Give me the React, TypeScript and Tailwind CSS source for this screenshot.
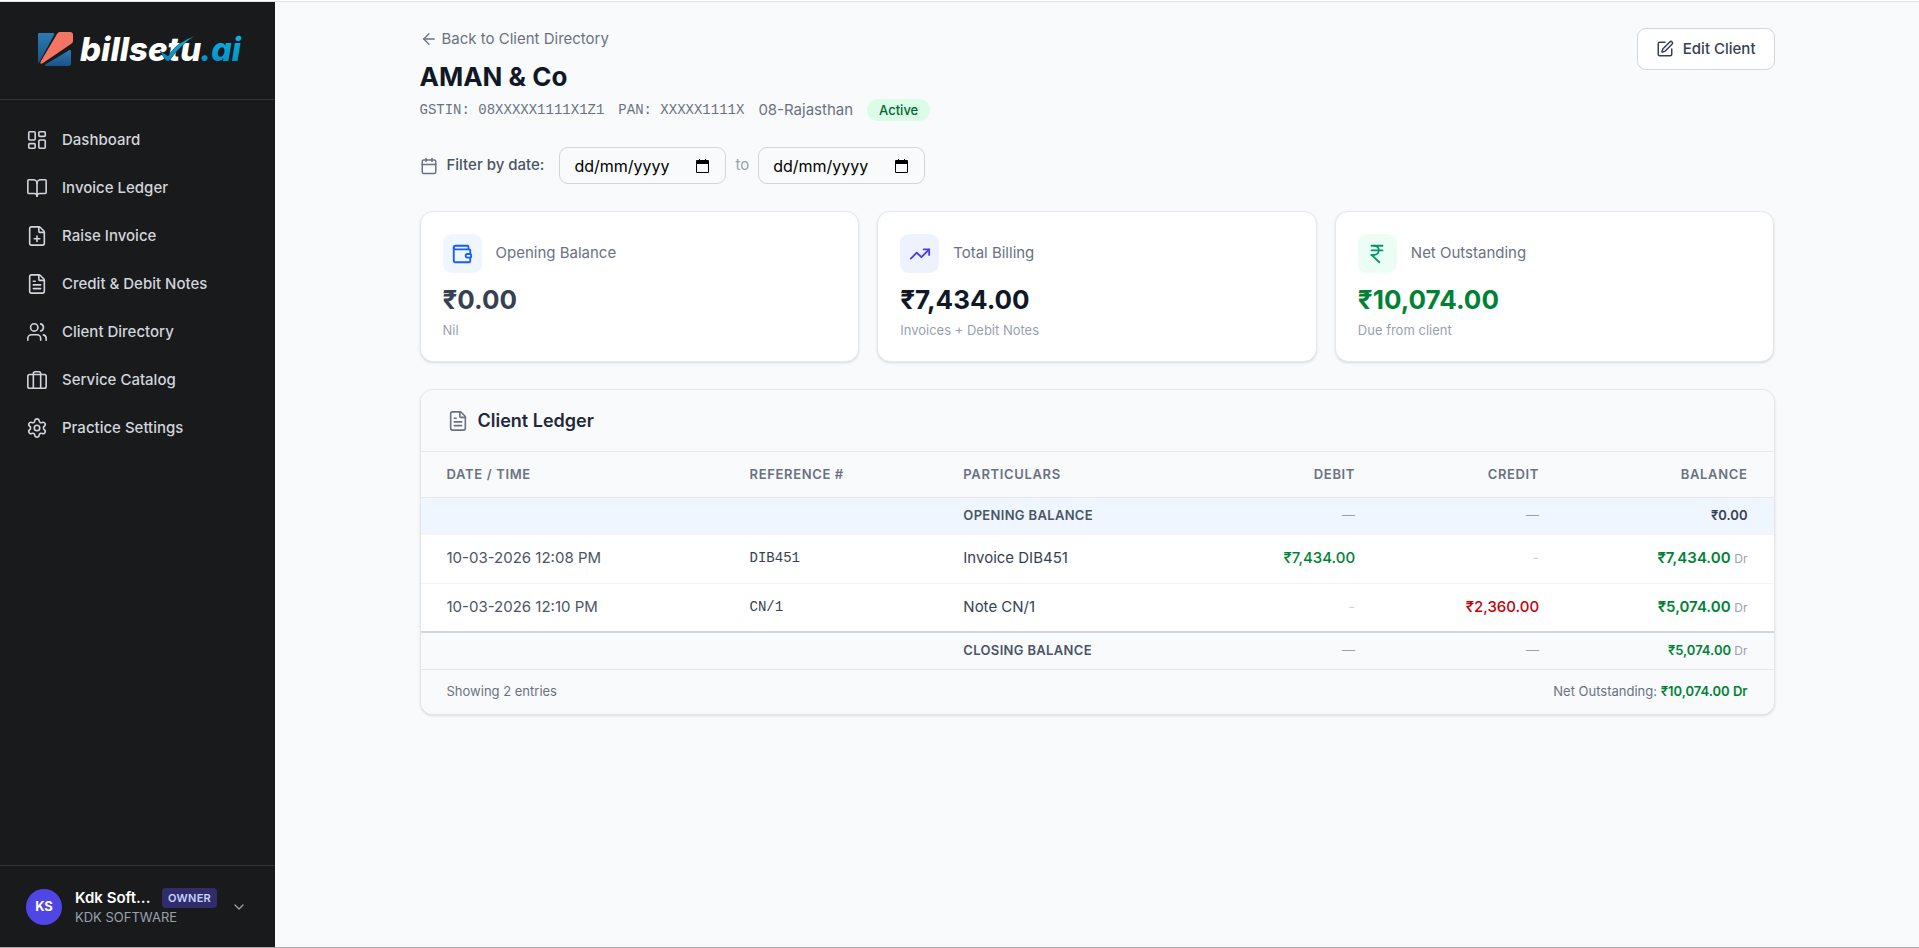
import type { ReactNode } from "react"
import {
    ArrowLeft,
    BookOpen,
    Calendar,
    ChevronDown,
    FilePlus,
    FileText,
    IndianRupee,
    LayoutDashboard,
    Settings,
    SquarePen,
    TrendingUp,
    Users,
    Wallet,
} from "lucide-react"

const ServiceIcon = ({ className }: { className?: string }) => (
    <svg viewBox="0 0 24 24" fill="none" stroke="currentColor" strokeWidth="1.75" strokeLinecap="round" strokeLinejoin="round" className={className}>
        <rect x="2" y="6" width="20" height="15" rx="2" />
        <path d="M8 21V5a2 2 0 0 1 2-2h4a2 2 0 0 1 2 2v16" />
    </svg>
)

const navItems = [
    { label: "Dashboard", icon: LayoutDashboard },
    { label: "Invoice Ledger", icon: BookOpen },
    { label: "Raise Invoice", icon: FilePlus },
    { label: "Credit & Debit Notes", icon: FileText },
    { label: "Client Directory", icon: Users },
    { label: "Service Catalog", icon: ServiceIcon },
    { label: "Practice Settings", icon: Settings },
]

const entries = [
    { date: "10-03-2026 12:08 PM", reference: "DIB451", particulars: "Invoice DIB451", debit: "₹7,434.00", credit: "", balance: "₹7,434.00" },
    { date: "10-03-2026 12:10 PM", reference: "CN/1", particulars: "Note CN/1", debit: "", credit: "₹2,360.00", balance: "₹5,074.00" },
]

function Logo() {
    return (
        <svg viewBox="0 0 204 36" className="h-9 w-[204px] overflow-visible" role="img" aria-label="billsetu.ai">
            <defs>
                <linearGradient id="blue" x1="0" y1="0" x2="0" y2="1">
                    <stop offset="0" stopColor="#2b7cb3" />
                    <stop offset="1" stopColor="#1b5288" />
                </linearGradient>
                <linearGradient id="cyan" x1="0" y1="0" x2="0" y2="1">
                    <stop offset="0" stopColor="#06bdec" />
                    <stop offset="1" stopColor="#0587bf" />
                </linearGradient>
            </defs>
            <path d="M1 2H15Q17 2 16 4L2 30Q0 34 0 30V3Q0 2 1 2Z" fill="url(#blue)" />
            <path d="M22 1H32Q35 1 35 4V10Q35 12 33 13L5 32Q1 34 3 30L19 3Q20 1 22 1Z" fill="#f47563" />
            <path d="M30 20Q33 17 33 21V33Q33 35 31 35H9Q5 35 8 33Z" fill="url(#blue)" />
            <g fontSize="33" fontWeight="800" fontStyle="italic" fontFamily="Inter, sans-serif" className="[font-feature-settings:'cv11']">
                <text x="42" y="30" fill="#fff">billsetu</text>
                <text x="162" y="30" fontSize="32" fill="url(#cyan)">.ai</text>
            </g>
            <path d="M122 20L127 23L130 25Q140 10 157 5Q143 13 131 30H128Z" fill="url(#cyan)" stroke="#191a1b" strokeWidth="0.5" />
        </svg>
    )
}

function Sidebar() {
    return (
        <aside className="flex w-[275px] shrink-0 flex-col bg-[#191a1b]">
            <div className="flex h-[98px] items-start border-b border-[#303132] pt-[29px] pl-[38px]">
                <Logo />
            </div>
            <nav className="flex flex-1 flex-col pt-4">
                {navItems.map(({ label, icon: Icon }) => (
                    <a key={label} href="#" className="flex h-12 items-center gap-[14px] px-[26px] text-[15px] font-medium text-gray-300">
                        <Icon className="size-[22px]" strokeWidth={1.75} />
                        {label}
                    </a>
                ))}
            </nav>
            <button className="flex h-[82px] items-center border-t border-[#303132] pr-7 pl-[26px] text-left">
                <span className="flex size-9 items-center justify-center rounded-full bg-[#4f46e5] text-[13px] font-bold text-white">KS</span>
                <span className="ml-[13px] flex flex-1 flex-col">
                    <span className="flex items-center gap-[11px]">
                        <span className="w-[76px] text-[15px] leading-5 font-semibold text-white">Kdk Soft...</span>
                        <span className="rounded bg-[#312c6b] px-[6px] text-[11px] leading-5 font-semibold tracking-wide text-indigo-200">OWNER</span>
                    </span>
                    <span className="text-[13px] leading-[18px] text-gray-400">KDK SOFTWARE</span>
                </span>
                <ChevronDown className="size-4 text-gray-400" />
            </button>
        </aside>
    )
}

function DateInput({ label }: { label: string }) {
    return (
        <div className="flex h-[37px] w-[167px] items-center justify-between rounded-[9px] border border-gray-300 pr-4 pl-[14px]">
            <input
                type="text"
                aria-label={label}
                placeholder="dd/mm/yyyy"
                className="w-[110px] text-[16px] outline-none placeholder:text-black"
            />
            <button aria-label={`Pick ${label.toLowerCase()}`}>
                <svg viewBox="0 0 13 14" className="h-[14px] w-[13px]">
                    <path d="M3 0H4V1H9V0H10V1H12Q13 1 13 2V13Q13 14 12 14H1Q0 14 0 13V2Q0 1 1 1H3ZM1 5V13H12V5Z" fill="#000" fillRule="evenodd" />
                </svg>
            </button>
        </div>
    )
}

type StatCardProps = {
    label: string
    value: string
    note: string
    tile: string
    valueColor: string
    icon: ReactNode
}

function StatCard({ label, value, note, tile, valueColor, icon }: StatCardProps) {
    return (
        <div className="rounded-[13px] border border-gray-200 bg-white p-[22px] shadow-sm">
            <div className="flex items-center gap-[14px]">
                <div className={`flex size-[39px] items-center justify-center rounded-[9px] ${tile}`}>{icon}</div>
                <span className="text-[15px] text-gray-500">{label}</span>
            </div>
            <p className={`mt-[9px] text-[26px] leading-9 font-bold ${valueColor}`}>{value}</p>
            <p className="mt-[3px] text-[13px] leading-[18px] text-gray-400">{note}</p>
        </div>
    )
}

function SummaryRow({ label, className, children }: { label: string; className: string; children: ReactNode }) {
    return (
        <tr className={`h-[37px] text-[13px] font-semibold ${className}`}>
            <td />
            <td />
            <td className="px-[26px] tracking-wide text-gray-600">{label}</td>
            <td className="px-[26px] text-right font-normal text-gray-400">—</td>
            <td className="px-[26px] text-right font-normal text-gray-400">—</td>
            <td className="px-[26px] text-right">{children}</td>
        </tr>
    )
}

function Ledger() {
    return (
        <section className="mt-[27px] overflow-hidden rounded-[13px] border border-gray-200 bg-white shadow-sm">
            <div className="flex h-[62px] items-center gap-[9px] border-b border-gray-200 bg-gray-50 px-[26px]">
                <FileText className="size-[22px] text-gray-500" strokeWidth={1.75} />
                <h2 className="text-[18px] font-semibold text-gray-800">Client Ledger</h2>
            </div>
            <table className="w-full table-fixed border-collapse text-[15px]">
                <colgroup>
                    <col className="w-[22.4%]" />
                    <col className="w-[15.8%]" />
                    <col className="w-[20.7%]" />
                    <col className="w-[12.1%]" />
                    <col className="w-[13.6%]" />
                    <col className="w-[15.4%]" />
                </colgroup>
                <thead>
                    <tr className="h-[45px] border-b border-gray-200 bg-gray-50 text-left text-[13px] tracking-wider text-gray-500">
                        <th className="px-[26px] font-semibold">DATE / TIME</th>
                        <th className="px-[26px] font-semibold">REFERENCE #</th>
                        <th className="px-[26px] font-semibold">PARTICULARS</th>
                        <th className="px-[26px] text-right font-semibold">DEBIT</th>
                        <th className="px-[26px] text-right font-semibold">CREDIT</th>
                        <th className="px-[26px] text-right font-semibold">BALANCE</th>
                    </tr>
                </thead>
                <tbody>
                    <SummaryRow label="OPENING BALANCE" className="border-b border-gray-100 bg-blue-50">
                        <span className="text-gray-700">₹0.00</span>
                    </SummaryRow>
                    {entries.map((entry) => (
                        <tr key={entry.reference} className="h-[49px] border-b border-gray-100 last:border-b-0">
                            <td className="px-[26px] text-gray-600">{entry.date}</td>
                            <td className="px-[26px] font-['Liberation_Mono',monospace] text-[14px] text-gray-700">{entry.reference}</td>
                            <td className="px-[26px] text-gray-700">{entry.particulars}</td>
                            <td className="px-[26px] text-right font-medium text-green-700">
                                {entry.debit || <span className="font-normal text-gray-300">-</span>}
                            </td>
                            <td className="px-[26px] text-right font-medium text-red-700">
                                {entry.credit || <span className="font-normal text-gray-300">-</span>}
                            </td>
                            <td className="px-[26px] text-right font-semibold text-green-700">
                                {entry.balance} <span className="text-[12px] font-normal text-gray-400">Dr</span>
                            </td>
                        </tr>
                    ))}
                </tbody>
                <tfoot>
                    <SummaryRow label="CLOSING BALANCE" className="border-t-2 border-gray-300 bg-gray-50">
                        <span className="text-green-700">₹5,074.00</span> <span className="text-[12px] font-normal text-gray-400">Dr</span>
                    </SummaryRow>
                </tfoot>
            </table>
            <div className="flex h-[45px] items-center justify-between border-t border-gray-200 bg-gray-50 px-[26px] text-[13px] text-gray-500">
                <span>Showing 2 entries</span>
                <span>
                    Net Outstanding: <span className="font-semibold text-green-700">₹10,074.00 Dr</span>
                </span>
            </div>
        </section>
    )
}

export default function App() {
    return (
        <div className="flex min-h-screen flex-col bg-white pt-px font-['Inter',sans-serif]">
            <div className="flex flex-1 border-t border-b border-t-[#dfe4e2] border-b-[#aaaaaa] bg-gray-50">
                <Sidebar />
                <main className="flex-1 px-[26px] pt-[26px]">
                    <div className="mx-auto max-w-[1355px]">
                        <header className="flex items-start justify-between">
                            <div>
                                <a href="#" className="flex items-center gap-1 text-[15px] leading-[22px] text-gray-500">
                                    <ArrowLeft className="size-[18px]" strokeWidth={1.75} />
                                    Back to Client Directory
                                </a>
                                <h1 className="mt-[9px] text-[26px] leading-9 font-bold text-gray-900">AMAN &amp; Co</h1>
                                <div className="mt-1 flex items-center gap-[14px] text-[15px] leading-[22px] text-gray-500">
                                    <span className="font-['Liberation_Mono',monospace] text-[14px]">GSTIN: 08XXXXX1111X1Z1</span>
                                    <span className="font-['Liberation_Mono',monospace] text-[14px]">PAN: XXXXX1111X</span>
                                    <span>08-Rajasthan</span>
                                    <span className="rounded-full bg-green-100 px-3 text-[13px] font-medium text-green-800">Active</span>
                                </div>
                            </div>
                            <button className="flex h-[42px] items-center gap-[9px] rounded-[9px] border border-gray-300 bg-white px-[18px] text-[15px] font-medium text-gray-700">
                                <SquarePen className="size-[18px]" />
                                Edit Client
                            </button>
                        </header>

                        <div className="mt-[26px] flex items-center gap-[9px]">
                            <Calendar className="size-[18px] text-gray-500" />
                            <span className="mr-1.5 text-[15px] font-medium text-gray-600">Filter by date:</span>
                            <DateInput label="From date" />
                            <span className="text-[15px] text-gray-400">to</span>
                            <DateInput label="To date" />
                        </div>

                        <div className="mt-[27px] grid grid-cols-3 gap-[18px]">
                            <StatCard
                                label="Opening Balance"
                                value="₹0.00"
                                note="Nil"
                                tile="bg-blue-50 text-blue-600"
                                valueColor="text-gray-700"
                                icon={<Wallet className="size-[22px]" />}
                            />
                            <StatCard
                                label="Total Billing"
                                value="₹7,434.00"
                                note="Invoices + Debit Notes"
                                tile="bg-indigo-50 text-indigo-600"
                                valueColor="text-gray-900"
                                icon={<TrendingUp className="size-[22px]" />}
                            />
                            <StatCard
                                label="Net Outstanding"
                                value="₹10,074.00"
                                note="Due from client"
                                tile="bg-emerald-50 text-emerald-600"
                                valueColor="text-green-700"
                                icon={<IndianRupee className="size-[22px]" />}
                            />
                        </div>

                        <Ledger />
                    </div>
                </main>
            </div>
        </div>
    )
}
